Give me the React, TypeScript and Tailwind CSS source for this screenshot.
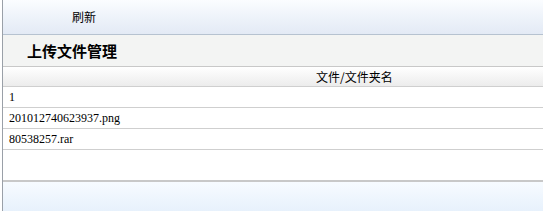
import React from 'react';

const files = ['1', '201012740623937.png', '80538257.rar'];

const cjk = { fontFamily: '"Noto Sans CJK SC", "Noto Sans", sans-serif' };
const serif = { fontFamily: '"Liberation Serif", "Noto Sans CJK SC", serif' };

export default function App() {
  return (
    <div className="w-[543px] h-[211px] bg-white overflow-hidden">
      <div className="ml-[2px] h-full flex flex-col border-l border-[#9aa0a8]">
        {/* Toolbar */}
        <div className="h-[35px] shrink-0 flex items-center border-b border-[#b6c2d0] bg-gradient-to-b from-[#fbfdff] via-[#eef3fa] to-[#e3eaf5]">
          <button className="ml-[69px] text-[12px] leading-none text-black" style={cjk}>
            刷新
          </button>
        </div>

        {/* Title */}
        <div className="h-[32px] shrink-0 flex items-center bg-[#f3f4f3] border-b border-[#c8c8c8] pl-[24px]">
          <h2 className="text-[15px] font-bold text-black leading-none" style={cjk}>
            上传文件管理
          </h2>
        </div>

        {/* Table header */}
        <div className="h-[20px] shrink-0 flex items-center border-b border-[#cfcfcf] bg-gradient-to-b from-white to-[#ececec] pl-[313px]">
          <span className="text-[12px] leading-none text-black" style={cjk}>
            文件/文件夹名
          </span>
        </div>

        {/* Rows */}
        {files.map((f) => (
          <div
            key={f}
            className="h-[21px] shrink-0 flex items-center border-b border-[#cfcfcf] pl-[6px] text-[12px] text-black"
            style={serif}
          >
            {f}
          </div>
        ))}

        <div className="flex-1 border-b-2 border-[#c8c8c8]" />

        {/* Footer */}
        <div className="h-[29px] shrink-0 bg-gradient-to-b from-[#f7fbff] to-[#e7f1fc]" />
      </div>
    </div>
  );
}
